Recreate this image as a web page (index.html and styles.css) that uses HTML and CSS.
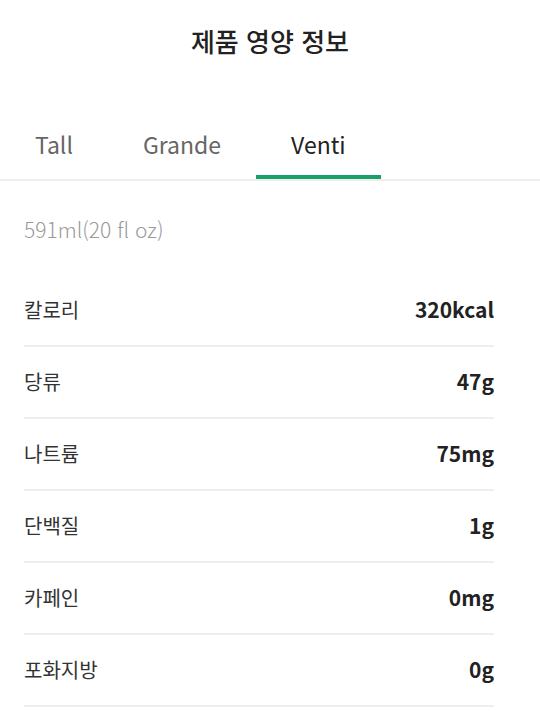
FILE: index.html
```html
<!DOCTYPE html>
<html lang="ko">
<head>
<meta charset="utf-8">
<title>제품 영양 정보</title>
<link rel="stylesheet" href="styles.css">
</head>
<body>
<div class="page">
  <header class="header"><h1 class="title">제품 영양 정보</h1></header>
  <nav class="tabs">
    <div class="tab">Tall</div>
    <div class="tab">Grande</div>
    <div class="tab active">Venti</div>
  </nav>
  <section class="content">
    <p class="size">591ml(20 fl oz)</p>
    <ul class="list">
      <li class="row"><span class="label">칼로리</span><span class="value">320kcal</span></li>
      <li class="row"><span class="label">당류</span><span class="value">47g</span></li>
      <li class="row"><span class="label">나트륨</span><span class="value">75mg</span></li>
      <li class="row"><span class="label">단백질</span><span class="value">1g</span></li>
      <li class="row"><span class="label">카페인</span><span class="value">0mg</span></li>
      <li class="row"><span class="label">포화지방</span><span class="value">0g</span></li>
    </ul>
  </section>
</div>
</body>
</html>
```
FILE: styles.css
```css
* { box-sizing: border-box; margin: 0; padding: 0; }
html, body { background: #fff; }
body {
  font-family: "Noto Sans CJK KR", "Noto Sans", sans-serif;
  color: #222;
}
.page { width: 540px; }
.header {
  height: 80px;
  display: flex;
  align-items: center;
  justify-content: center;
}
.title {
  font-size: 26px;
  font-weight: 500;
  color: #222;
}
.tabs {
  margin-top: 34px;
  display: flex;
  height: 67px;
  border-bottom: 2px solid #eeeeee;
}
.tab {
  padding: 0 35px 6px;
  font-size: 23px;
  color: #666;
  display: flex;
  align-items: center;
  position: relative;
}
.tab.active { color: #222; }
.tab.active::after {
  content: "";
  position: absolute;
  left: 0; right: 0; bottom: 0;
  height: 4px;
  background: #1a9e6a;
}
.content { padding: 0 46px 0 24px; }
.size {
  margin-top: 35px;
  font-size: 21px;
  font-weight: 300;
  color: #999;
  height: 26px;
  line-height: 26px;
  margin-bottom: 33px;
}
.list { list-style: none; }
.row {
  height: 72px;
  display: flex;
  justify-content: space-between;
  align-items: center;
  border-bottom: 2px solid #eeeeee;
  padding-bottom: 2px;
}
.label { font-size: 20px; color: #333; }
.value { font-size: 21px; font-weight: 700; color: #222; }
```
